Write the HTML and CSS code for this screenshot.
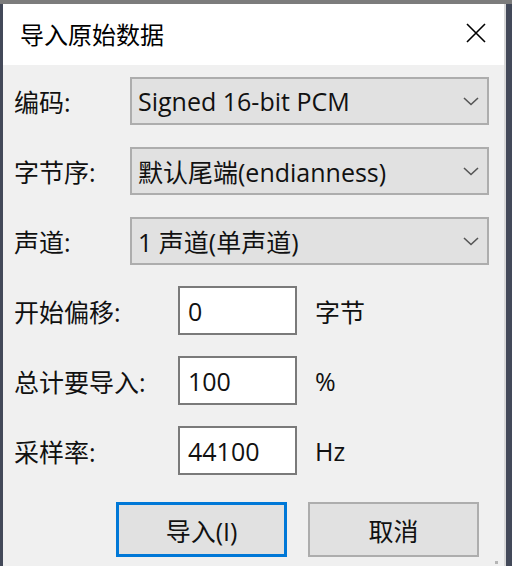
FILE: index.html
```html
<!DOCTYPE html>
<html lang="zh">
<head>
<meta charset="utf-8">
<title>导入原始数据</title>
<link rel="stylesheet" href="styles.css">
</head>
<body>
<div class="topstrip"></div>
<div class="frame">
  <div class="titlebar">
    <div class="title">导入原始数据</div>
    <svg class="close" width="20" height="20" viewBox="0 0 20 20"><path d="M1 1L19 19M19 1L1 19" stroke="#000" stroke-width="1.6" fill="none"/></svg>
  </div>
  <div class="content">
    <div class="row combo-row">
      <div class="label lw1">编码:</div>
      <div class="combo"><span>Signed 16-bit PCM</span><svg class="chev" width="16" height="9" viewBox="0 0 16 9"><path d="M1 1L8 7.5L15 1" stroke="#555" stroke-width="1.6" fill="none"/></svg></div>
    </div>
    <div class="row combo-row">
      <div class="label lw1">字节序:</div>
      <div class="combo"><span>默认尾端(endianness)</span><svg class="chev" width="16" height="9" viewBox="0 0 16 9"><path d="M1 1L8 7.5L15 1" stroke="#555" stroke-width="1.6" fill="none"/></svg></div>
    </div>
    <div class="row combo-row">
      <div class="label lw1">声道:</div>
      <div class="combo"><span>1 声道(单声道)</span><svg class="chev" width="16" height="9" viewBox="0 0 16 9"><path d="M1 1L8 7.5L15 1" stroke="#555" stroke-width="1.6" fill="none"/></svg></div>
    </div>
    <div class="row field-row first-field">
      <div class="label lw2">开始偏移:</div>
      <div class="field">0</div>
      <div class="unit">字节</div>
    </div>
    <div class="row field-row">
      <div class="label lw2">总计要导入:</div>
      <div class="field">100</div>
      <div class="unit">%</div>
    </div>
    <div class="row field-row">
      <div class="label lw2">采样率:</div>
      <div class="field">44100</div>
      <div class="unit">Hz</div>
    </div>
    <div class="buttons">
      <div class="btn default">导入(I)</div>
      <div class="btn">取消</div>
    </div>
  </div>
  <div class="grip"></div>
</div>
</body>
</html>
```

FILE: styles.css
```css
html, body {
  margin: 0;
  padding: 0;
}
body {
  width: 512px;
  height: 566px;
  overflow: hidden;
  background: #434959;
  font-family: "Open Sans", "Noto Sans CJK SC", sans-serif;
  color: #111;
}
.topstrip {
  height: 4px;
  background: #7c7c7c;
}
.frame {
  margin: 0 6px 0 3px;
  height: 562px;
  background: #f0f0f0;
  border-right: 2px solid #d8d8d8;
  box-sizing: border-box;
  position: relative;
}
.titlebar {
  height: 61px;
  background: #fff;
  display: flex;
  align-items: center;
  justify-content: space-between;
  padding: 0 18px 0 17px;
}
.title {
  font-family: "Noto Sans CJK SC", sans-serif;
  font-size: 24px;
  color: #000;
  margin-top: -3px;
}
.close {
  display: block;
  margin-top: -3px;
}
.content {
  display: flex;
  flex-direction: column;
  padding: 12px 0 0 11px;
}
.row {
  display: flex;
  align-items: center;
}
.combo-row {
  height: 48px;
  margin-bottom: 22px;
}
.field-row {
  height: 49px;
  margin-bottom: 21px;
}
.first-field {
  margin-top: -1px;
}
.label {
  font-size: 25px;
  white-space: nowrap;
}
.lw1 { width: 116px; }
.lw2 { width: 164px; }
.combo {
  width: 359px;
  height: 48px;
  box-sizing: border-box;
  border: 2px solid #adadad;
  background: #e1e1e1;
  display: flex;
  align-items: center;
  justify-content: space-between;
  padding: 0 8px 0 6px;
  font-size: 25px;
}
.chev {
  display: block;
}
.field {
  width: 119px;
  height: 49px;
  box-sizing: border-box;
  border: 2px solid #7a7a7a;
  background: #fff;
  display: flex;
  align-items: center;
  padding-left: 8px;
  font-size: 25px;
}
.unit {
  margin-left: 18px;
  font-size: 25px;
}
.buttons {
  display: flex;
  gap: 21px;
  padding-left: 102px;
  margin-top: 6px;
}
.btn {
  width: 171px;
  height: 55px;
  box-sizing: border-box;
  border: 2px solid #adadad;
  background: #e1e1e1;
  display: flex;
  align-items: center;
  justify-content: center;
  font-size: 25px;
}
.btn.default {
  border: 3px solid #0078d7;
}
.grip {
  position: absolute;
  right: 6px;
  bottom: 2px;
  width: 3px;
  height: 3px;
  background: #b5b5b5;
}
```
